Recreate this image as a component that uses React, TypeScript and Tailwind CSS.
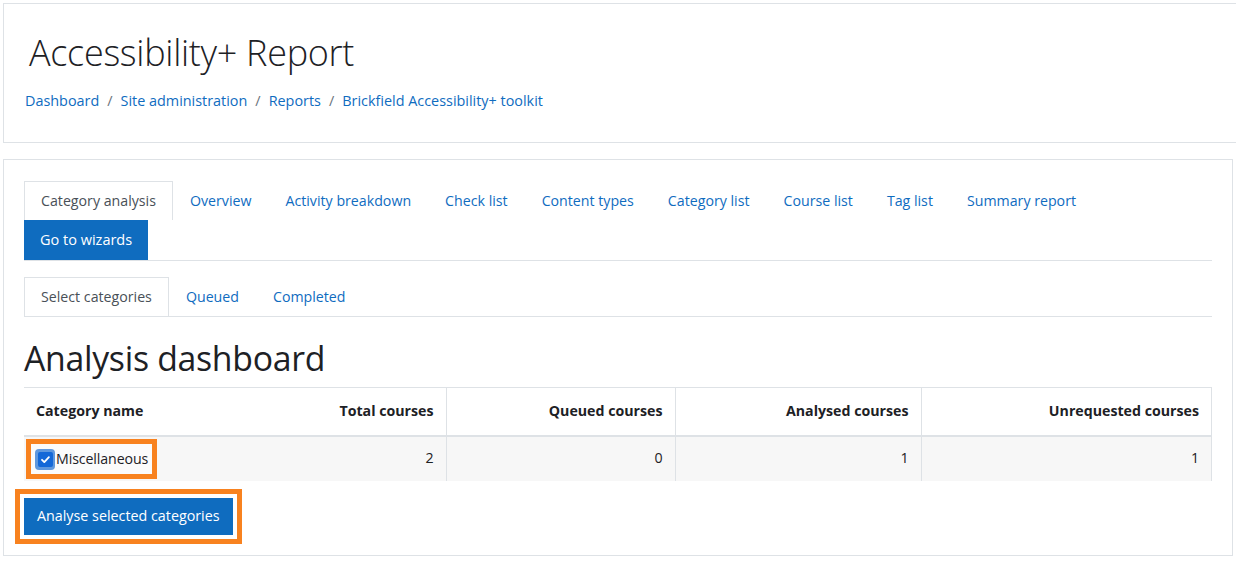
import type { ReactNode } from "react";

const TABS = [
  "Overview",
  "Activity breakdown",
  "Check list",
  "Content types",
  "Category list",
  "Course list",
  "Tag list",
  "Summary report",
];

const CRUMBS = ["Dashboard", "Site administration", "Reports", "Brickfield Accessibility+ toolkit"];

function Tab({ children, active }: { children: ReactNode; active?: boolean }) {
  return (
    <div
      className={`h-[39px] px-4 flex items-center border border-b-0 ${
        active ? "border-[#dee2e6] bg-white text-[#495057]" : "border-transparent text-[#0f6cbf]"
      }`}
    >
      {children}
    </div>
  );
}

function Check() {
  return (
    <span className="w-[20px] h-[21px] rounded-[4px] bg-[#5f98de] flex items-center justify-center mr-[1px]">
      <span className="w-[15px] h-[15px] rounded-[2px] bg-[#1468d8] flex items-center justify-center">
        <svg width="11" height="11" viewBox="0 0 12 12" fill="none">
          <path d="M2.2 6.3l2.5 2.5 5-5.3" stroke="white" strokeWidth="2" strokeLinecap="round" strokeLinejoin="round" />
        </svg>
      </span>
    </span>
  );
}

export default function App() {
  return (
    <div className="min-h-screen bg-white overflow-hidden font-['Open_Sans',sans-serif] text-[14.2px] text-[#1d2125] pt-[3px] pl-[3px]">
      {/* page header */}
      <div className="w-[1260px] h-[140px] border border-[#dee2e6] pl-[21px] pt-[26px]">
        <h1 className="ml-1 text-[36px] leading-[45px] font-light tracking-[-0.3px]">Accessibility+ Report</h1>
        <nav className="mt-[15px] leading-[22.5px] text-[14.4px] flex items-center text-[#0f6cbf]">
          {CRUMBS.map((c, i) => (
            <span key={c} className="flex items-center">
              {i > 0 && <span className="px-2 text-[#6a737b]">/</span>}
              <a>{c}</a>
            </span>
          ))}
        </nav>
      </div>

      {/* main card */}
      <div className="mt-4 w-[1230px] h-[397px] border border-[#dee2e6] px-5 pt-[21px]">
        <div className="flex flex-wrap border-b border-[#dee2e6] leading-[22.5px]">
          <Tab active>Category analysis</Tab>
          {TABS.map((t) => (
            <Tab key={t}>{t}</Tab>
          ))}
          <div className="basis-full h-0" />
          <div className="h-[40px] px-4 pt-[1px] flex items-center bg-[#0f6cbf] text-white text-[14.5px]">Go to wizards</div>
        </div>

        <div className="mt-4 flex border-b border-[#dee2e6] leading-[22.5px]">
          <Tab active>Select categories</Tab>
          <Tab>Queued</Tab>
          <Tab>Completed</Tab>
        </div>

        <h2 className="mt-[21px] text-[33.8px] leading-[40px] tracking-[-0.3px]">Analysis dashboard</h2>

        <table className="mt-[9px] w-full table-fixed border-collapse leading-[22.5px]">
          <colgroup>
            <col className="w-[211px]" />
            <col className="w-[211px]" />
            <col className="w-[229px]" />
            <col className="w-[246px]" />
            <col />
          </colgroup>
          <thead>
            <tr className="border-t border-[#dee2e6] border-b-2 font-bold text-left">
              <th className="p-3 text-left">Category name</th>
              <th className="p-3 text-right border-r border-[#dee2e6]">Total courses</th>
              <th className="p-3 text-right border-r border-[#dee2e6]">Queued courses</th>
              <th className="p-3 text-right border-r border-[#dee2e6]">Analysed courses</th>
              <th className="p-3 text-right border-r border-[#dee2e6]">Unrequested courses</th>
            </tr>
          </thead>
          <tbody>
            <tr className="bg-[#f7f7f7] h-[45px]">
              <td className="px-3 align-middle">
                <label className="flex w-fit items-center h-[22px] mt-[1px] -ml-[1px] bg-[#fbfbfb] shadow-[0_0_0_4px_#fbfbfb,0_0_0_9px_#f8821f]">
                  <Check />
                  <span className="tracking-[-0.1px]">Miscellaneous</span>
                </label>
              </td>
              <td className="px-3 text-right border-r border-[#dee2e6]">2</td>
              <td className="px-3 text-right border-r border-[#dee2e6]">0</td>
              <td className="px-3 text-right border-r border-[#dee2e6]">1</td>
              <td className="px-3 text-right border-r border-[#dee2e6]">1</td>
            </tr>
          </tbody>
        </table>

        <button className="mt-[17px] h-[37px] px-[13px] bg-[#0f6cbf] text-white text-[14.3px] leading-[22.5px] shadow-[0_0_0_4px_#ffffff,0_0_0_9px_#f8821f]">
          Analyse selected categories
        </button>
      </div>
    </div>
  );
}
